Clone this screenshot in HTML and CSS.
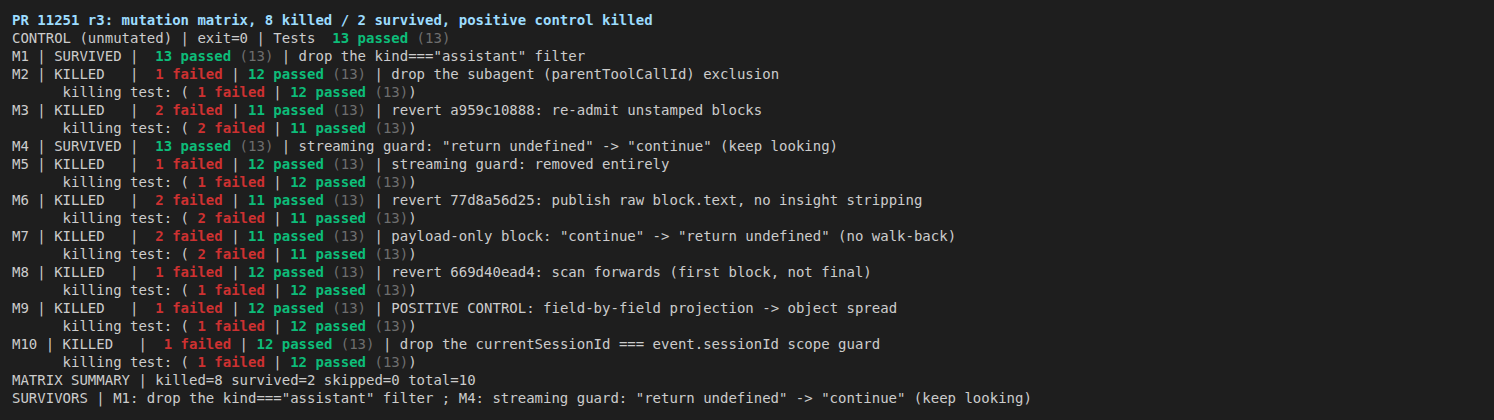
FILE: index.html
```html
<!DOCTYPE html>
<html>
<head>
<meta charset="utf-8">
<link rel="stylesheet" href="styles.css">
</head>
<body>
<pre class="term"><span class="h">PR 11251 r3: mutation matrix, 8 killed / 2 survived, positive control killed</span>
CONTROL (unmutated) | exit=0 | Tests  <span class="g">13 passed</span> <span class="d">(13)</span>
M1 | SURVIVED |  <span class="g">13 passed</span> <span class="d">(13)</span> | drop the kind==="assistant" filter
M2 | KILLED   |  <span class="r">1 failed</span> | <span class="g">12 passed</span> <span class="d">(13)</span> | drop the subagent (parentToolCallId) exclusion
      killing test: ( <span class="r">1 failed</span> | <span class="g">12 passed</span> <span class="d">(13)</span>)
M3 | KILLED   |  <span class="r">2 failed</span> | <span class="g">11 passed</span> <span class="d">(13)</span> | revert a959c10888: re-admit unstamped blocks
      killing test: ( <span class="r">2 failed</span> | <span class="g">11 passed</span> <span class="d">(13)</span>)
M4 | SURVIVED |  <span class="g">13 passed</span> <span class="d">(13)</span> | streaming guard: "return undefined" -&gt; "continue" (keep looking)
M5 | KILLED   |  <span class="r">1 failed</span> | <span class="g">12 passed</span> <span class="d">(13)</span> | streaming guard: removed entirely
      killing test: ( <span class="r">1 failed</span> | <span class="g">12 passed</span> <span class="d">(13)</span>)
M6 | KILLED   |  <span class="r">2 failed</span> | <span class="g">11 passed</span> <span class="d">(13)</span> | revert 77d8a56d25: publish raw block.text, no insight stripping
      killing test: ( <span class="r">2 failed</span> | <span class="g">11 passed</span> <span class="d">(13)</span>)
M7 | KILLED   |  <span class="r">2 failed</span> | <span class="g">11 passed</span> <span class="d">(13)</span> | payload-only block: "continue" -&gt; "return undefined" (no walk-back)
      killing test: ( <span class="r">2 failed</span> | <span class="g">11 passed</span> <span class="d">(13)</span>)
M8 | KILLED   |  <span class="r">1 failed</span> | <span class="g">12 passed</span> <span class="d">(13)</span> | revert 669d40ead4: scan forwards (first block, not final)
      killing test: ( <span class="r">1 failed</span> | <span class="g">12 passed</span> <span class="d">(13)</span>)
M9 | KILLED   |  <span class="r">1 failed</span> | <span class="g">12 passed</span> <span class="d">(13)</span> | POSITIVE CONTROL: field-by-field projection -&gt; object spread
      killing test: ( <span class="r">1 failed</span> | <span class="g">12 passed</span> <span class="d">(13)</span>)
M10 | KILLED   |  <span class="r">1 failed</span> | <span class="g">12 passed</span> <span class="d">(13)</span> | drop the currentSessionId === event.sessionId scope guard
      killing test: ( <span class="r">1 failed</span> | <span class="g">12 passed</span> <span class="d">(13)</span>)
MATRIX SUMMARY | killed=8 survived=2 skipped=0 total=10
SURVIVORS | M1: drop the kind==="assistant" filter ; M4: streaming guard: "return undefined" -&gt; "continue" (keep looking)</pre>
</body>
</html>
```

FILE: styles.css
```css
html, body {
  margin: 0;
  padding: 0;
  background: #1e1e1e;
  height: 100%;
}
.term {
  margin: 0;
  padding: 11px 12px;
  font-family: "DejaVu Sans Mono", monospace;
  font-size: 14px;
  line-height: 18px;
  color: #cccccc;
  white-space: pre;
}
.h {
  color: #9cdcfe;
  font-weight: bold;
}
.g {
  color: #0dbc79;
  font-weight: bold;
}
.r {
  color: #cd3131;
  font-weight: bold;
}
.d {
  color: #6e6e6e;
}
```
